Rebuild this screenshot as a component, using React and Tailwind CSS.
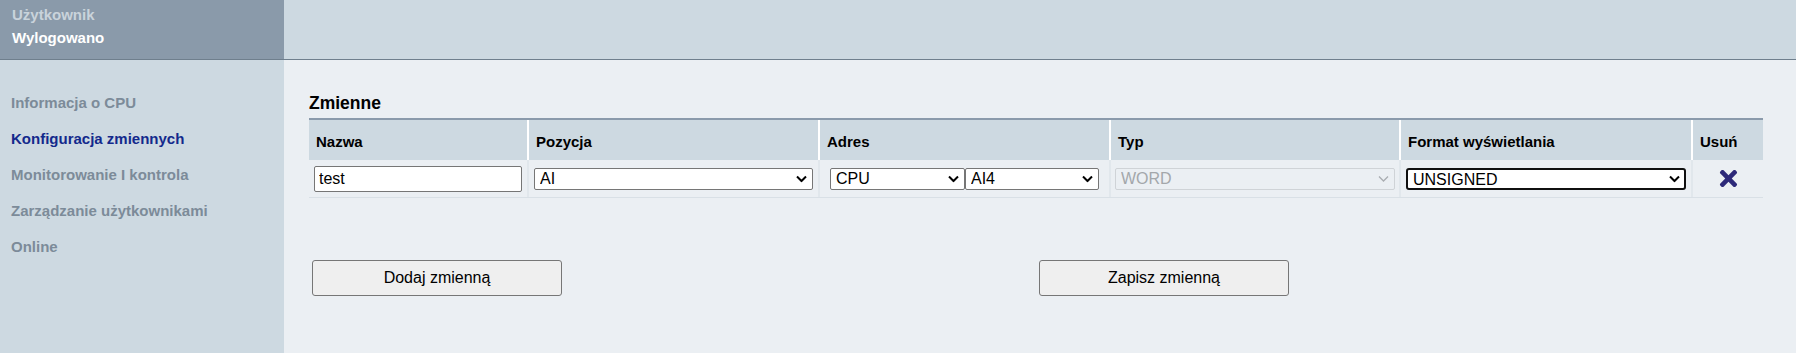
import { FaTimes } from 'react-icons/fa'
import clsx from 'clsx'

const menu = [
  { label: 'Informacja o CPU' },
  { label: 'Konfiguracja zmiennych', active: true },
  { label: 'Monitorowanie I kontrola' },
  { label: 'Zarządzanie użytkownikami' },
  { label: 'Online' },
]

const columns = ['Nazwa', 'Pozycja', 'Adres', 'Typ', 'Format wyświetlania', 'Usuń']

function Chevron({ muted }) {
  return (
    <svg
      className="pointer-events-none absolute right-[6px] top-1/2 -translate-y-1/2"
      width="11"
      height="7"
      viewBox="0 0 11 7"
      fill="none"
    >
      <polyline
        points="1,1 5.5,5.5 10,1"
        stroke={muted ? '#a9adb1' : '#000'}
        strokeWidth={muted ? 1.3 : 2}
      />
    </svg>
  )
}

function Select({ value, options, disabled, focused, className }) {
  return (
    <div className={clsx('relative', className)}>
      <select
        defaultValue={value}
        disabled={disabled}
        className={clsx(
          'block h-[22px] w-full appearance-none pl-[5px] text-[16px] leading-5 outline-none',
          focused
            ? 'rounded-[3px] border-2 border-[#101010] bg-white pl-[4px] text-black'
            : disabled
              ? 'rounded-[2px] border border-[#cfd3d7] bg-transparent text-[#a3a7ab]'
              : 'rounded-[2px] border border-[#767676] bg-white text-black',
        )}
      >
        {options.map((o) => (
          <option key={o}>{o}</option>
        ))}
      </select>
      <Chevron muted={disabled} />
    </div>
  )
}

export default function App() {
  return (
    <div className="flex min-h-[353px] flex-col bg-[#ebeff3] font-['Liberation_Sans',Arial,sans-serif]">
      <header className="flex h-[60px] border-b border-[#6f7f8d]">
        <div className="flex w-[284px] flex-col gap-[3px] bg-[#8a9aaa] pl-3 pt-[5px] text-[15px] font-bold leading-5">
          <span className="text-[#c9d3db]">Użytkownik</span>
          <span className="text-white">Wylogowano</span>
        </div>
        <div className="flex-1 bg-[#cdd9e1]" />
      </header>

      <div className="flex flex-1">
        <nav className="w-[284px] bg-[#cdd9e1] pl-[11px] pt-[25px]">
          {menu.map((m) => (
            <div
              key={m.label}
              className={clsx(
                'flex h-9 items-center text-[15px] font-bold leading-5',
                m.active ? 'text-[#13298c]' : 'text-[#7c8b99]',
              )}
            >
              {m.label}
            </div>
          ))}
        </nav>

        <main className="flex-1 pl-[25px] pt-[33px]">
          <h2 className="mb-[5px] text-[17.5px] font-bold leading-5 text-black">Zmienne</h2>

          <div className="w-[1454px] border-t-2 border-[#8a9aab]">
            <div className="grid grid-cols-[218px_291px_291px_290px_292px_72px] bg-[#cdd9e1]">
              {columns.map((c, i) => (
                <div
                  key={c}
                  className={clsx(
                    'flex h-10 items-center pl-[7px] pt-[3px] text-[15px] font-bold leading-5 text-black',
                    i > 0 && 'border-l-2 border-white',
                  )}
                >
                  {c}
                </div>
              ))}
            </div>

            <div className="grid h-[38px] grid-cols-[218px_291px_291px_290px_292px_72px] border-b border-[#d9e0e6]">
              <div className="flex items-center px-[5px]">
                <input
                  defaultValue="test"
                  className="h-[26px] w-full rounded-[2px] border border-[#767676] bg-white px-[4px] text-[16px] text-black outline-none"
                />
              </div>
              <div className="flex items-center border-l-2 border-[#e1e7ec] px-[5px]">
                <Select value="AI" options={['AI', 'DI', 'DO', 'AO']} className="w-full" />
              </div>
              <div className="flex items-center justify-center border-l-2 border-[#e1e7ec]">
                <Select value="CPU" options={['CPU']} className="w-[135px]" />
                <Select value="AI4" options={['AI1', 'AI2', 'AI3', 'AI4']} className="w-[134px]" />
              </div>
              <div className="flex items-center border-l-2 border-[#e1e7ec] px-[4px]">
                <Select value="WORD" options={['WORD']} disabled className="w-full" />
              </div>
              <div className="flex items-center border-l-2 border-[#e1e7ec] px-[5px]">
                <Select value="UNSIGNED" options={['UNSIGNED', 'SIGNED', 'HEX']} focused className="w-full" />
              </div>
              <div className="flex items-center justify-center border-l-2 border-[#e1e7ec]">
                <button type="button" className="text-[#2d2979]">
                  <FaTimes size={25} />
                </button>
              </div>
            </div>
          </div>

          <div className="mt-[62px] grid w-[1454px] grid-cols-2">
            <div>
              <button
                type="button"
                className="ml-[3px] h-9 w-[250px] rounded-[3px] border border-[#767676] bg-[#efefef] text-[16px] text-black"
              >
                Dodaj zmienną
              </button>
            </div>
            <div>
              <button
                type="button"
                className="ml-[3px] h-9 w-[250px] rounded-[3px] border border-[#767676] bg-[#efefef] text-[16px] text-black"
              >
                Zapisz zmienną
              </button>
            </div>
          </div>
        </main>
      </div>
    </div>
  )
}
